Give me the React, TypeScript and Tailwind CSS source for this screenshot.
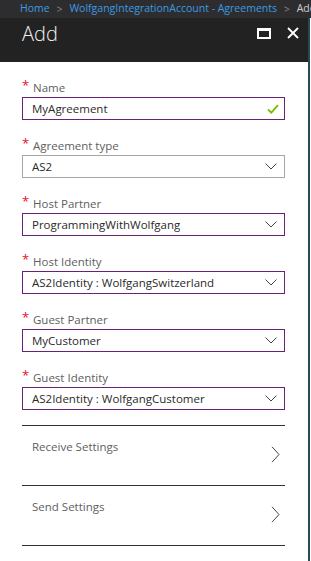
import React from 'react'

const font = { fontFamily: '"Open Sans", "Noto Sans", Arial, sans-serif' }

function Chevron() {
  return (
    <svg width="12" height="7" viewBox="0 0 12 7" className="shrink-0">
      <path d="M0.5 0.5 L6 6 L11.5 0.5" fill="none" stroke="#444" strokeWidth="1" />
    </svg>
  )
}

function Field({ label, value, purple = true, check = false }: { label: string; value: string; purple?: boolean; check?: boolean }) {
  return (
    <div className="mb-[17px]">
      <div className="h-[18px] flex items-center text-[11.5px] text-[#5e5e5e]">
        <span className="text-[#e81123] text-[13px] leading-none -mt-[5px] w-[11px]">*</span>
        <span>{label}</span>
      </div>
      <div
        className={`h-[23px] flex items-center justify-between pl-[9px] pr-[7px] border text-[11.5px] text-[#2a2a2a] ${
          purple ? 'border-[#68217a]' : 'border-[#a6a6a6]'
        }`}
      >
        <span className="truncate">{value}</span>
        {check ? (
          <svg width="12" height="10" viewBox="0 0 12 10" className="shrink-0 mr-[-2px]">
            <path d="M1 5.5 L4.3 8.6 L11 1.2" fill="none" stroke="#7fba00" strokeWidth="1.8" />
          </svg>
        ) : (
          <Chevron />
        )}
      </div>
    </div>
  )
}

function Section({ label }: { label: string }) {
  return (
    <div className="h-[60px] border-b border-[#333] flex justify-between pl-[10px] pr-[5px]">
      <span className="mt-[12px] text-[11.5px] text-[#5e5e5e]">{label}</span>
      <svg width="9" height="17" viewBox="0 0 9 17" className="mt-[20px]">
        <path d="M1 0.8 L8 8.5 L1 16.2" fill="none" stroke="#444" strokeWidth="1" />
      </svg>
    </div>
  )
}

export default function App() {
  return (
    <div className="w-[311px] h-[561px] bg-white overflow-hidden flex flex-col" style={font}>
      <div className="h-[18px] bg-[#2d2d2f] flex items-center pl-[20px] gap-[7px] text-[10.5px] text-[#3c9be0] whitespace-nowrap overflow-hidden">
        <span>Home</span>
        <span className="text-[#8a8a8a] text-[10px]">&gt;</span>
        <span>WolfgangIntegrationAccount - Agreements</span>
        <span className="text-[#8a8a8a] text-[10px]">&gt;</span>
        <span className="text-[#d0d0d0]">Add</span>
      </div>

      <div className="flex flex-1">
        <div className="w-[308px] flex flex-col">
          <div className="h-[44px] bg-[#222222] flex items-start justify-between pl-[22px] pr-[9px]">
            <span className="mt-[2px] text-[20px] font-light text-[#f0f0f0] leading-[28px]">Add</span>
            <div className="flex items-center gap-[16px] mt-[9px]">
              <div className="w-[14px] h-[11px] border-2 border-t-[3px] border-white" />
              <svg width="12" height="12" viewBox="0 0 12 12">
                <path d="M1 1 L11 11 M11 1 L1 11" stroke="#fff" strokeWidth="1.8" />
              </svg>
            </div>
          </div>

          <div className="pt-[17px] pl-[22px] pr-[23px]">
            <Field label="Name" value="MyAgreement" check />
            <Field label="Agreement type" value="AS2" purple={false} />
            <Field label="Host Partner" value="ProgrammingWithWolfgang" />
            <Field label="Host Identity" value="AS2Identity : WolfgangSwitzerland" />
            <Field label="Guest Partner" value="MyCustomer" />
            <Field label="Guest Identity" value="AS2Identity : WolfgangCustomer" />
            <div className="border-t border-[#333] -mt-[2px]">
              <Section label="Receive Settings" />
              <Section label="Send Settings" />
            </div>
          </div>
        </div>
        <div className="w-[2px] bg-[#23495a]" />
        <div className="flex-1 bg-white" />
      </div>
    </div>
  )
}
